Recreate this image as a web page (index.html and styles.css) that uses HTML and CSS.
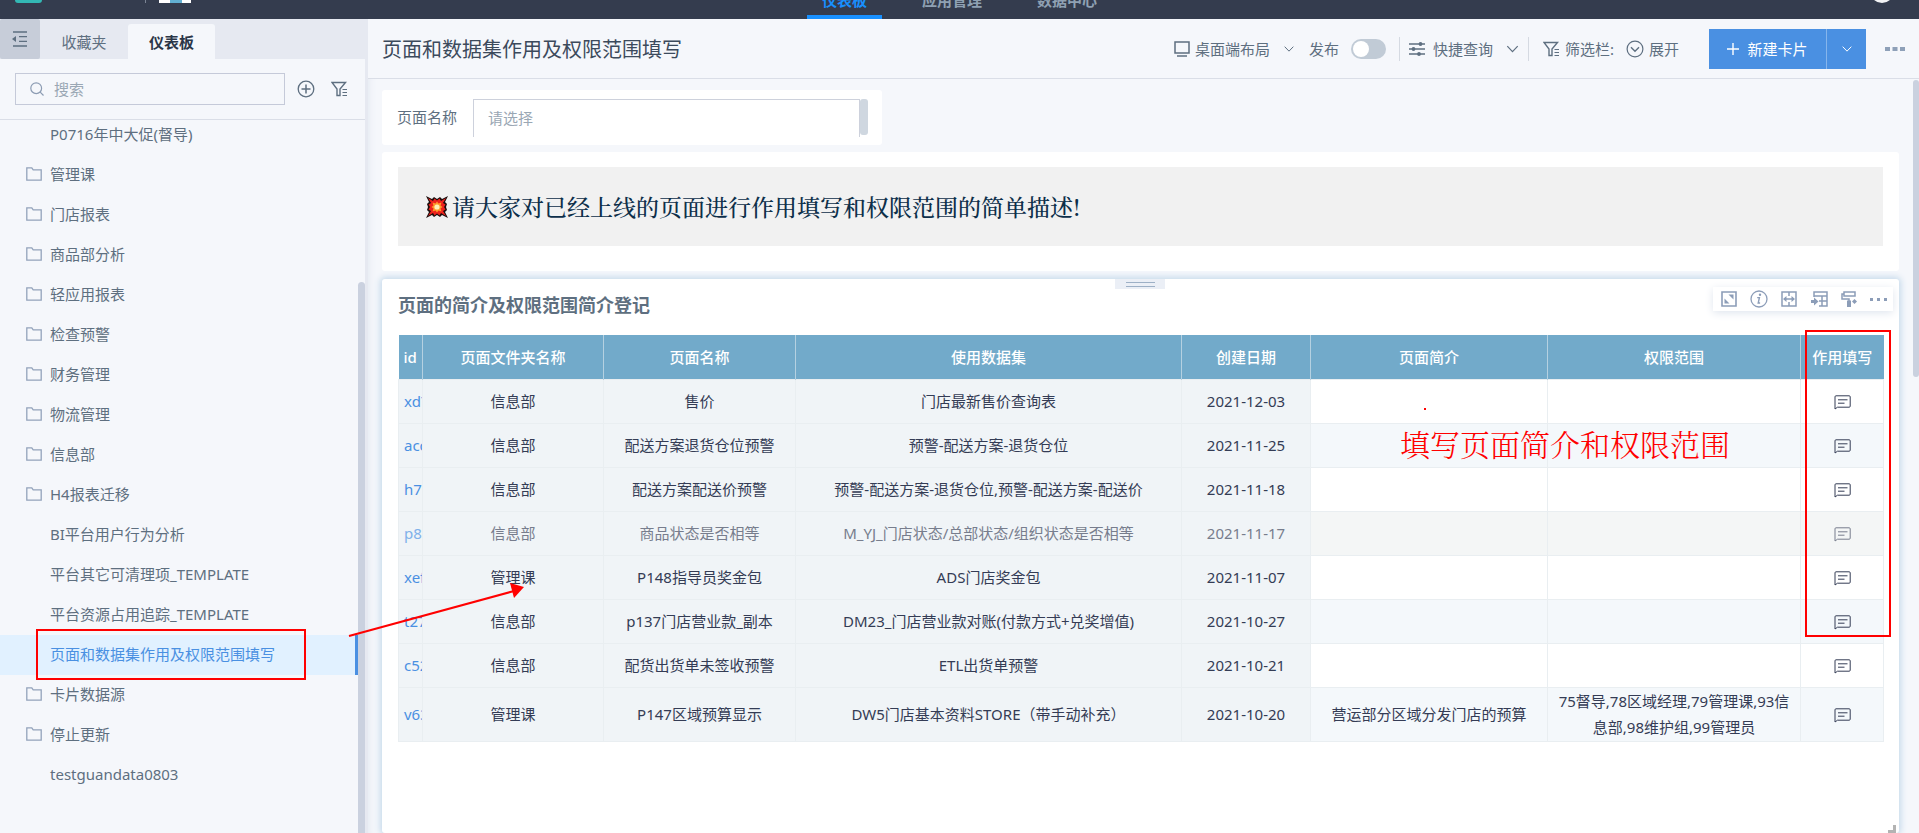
FILE: index.html
```html
<!DOCTYPE html>
<html lang="zh-CN">
<head>
<meta charset="utf-8">
<title>页面和数据集作用及权限范围填写</title>
<link rel="stylesheet" href="styles.css">
</head>
<body>
<svg class="defs" aria-hidden="true">
  <symbol id="folder" viewBox="0 0 16 16"><path d="M.8 14.2V1.8h5l1.4 2h8v10.400z" fill="none" stroke="currentColor" stroke-width="1.3"/></symbol>
  <symbol id="filter" viewBox="0 0 17 16"><path d="M1 1.500h13.500L9 8v6.500H6V8z" fill="none" stroke="currentColor" stroke-width="1.4"/><path d="M11.500 8.500H16M11.500 11.500H16M11.500 14.500H16" stroke="currentColor"/></symbol>
  <symbol id="chevron" viewBox="0 0 12 12"><path d="M.8 3.200 6 8.600l5.200-5.400" fill="none" stroke="currentColor" stroke-width="1.2"/></symbol>
  <symbol id="comment" viewBox="0 0 17 15"><path d="M1 14V1.800Q1 .8 2 .8h13.200q1 0 1 1v9.400q0 1-1 1H3.500z" fill="none" stroke="currentColor"/><path d="M4 4.800h9.500M4 8.200h6.500" stroke="currentColor"/></symbol>
</svg>

<header class="topbar">
  <div class="brand"><span class="logo"></span><span class="brand-line"></span><span class="avatar"></span></div>
  <nav class="topnav">
    <a href="#" class="current">仪表板</a>
    <a href="#">应用管理</a>
    <a href="#">数据中心</a>
  </nav>
  <span class="user"></span>
</header>

<div class="shell">
  <aside class="sidebar">
    <div class="tabs">
      <button class="collapse" aria-label="收起"><svg width="16" height="16" viewBox="0 0 16 16"><path d="M1 1h14M7 5.700h8M7 10.300h8M1 15h14" stroke="currentColor" stroke-width="1.3"/><path d="M0 8l4-3v6z" fill="currentColor"/></svg></button>
      <button class="tab">收藏夹</button>
      <button class="tab active">仪表板</button>
    </div>
    <div class="search-row">
      <label class="search">
        <svg width="14" height="14" viewBox="0 0 14 14"><circle cx="6.200" cy="6.200" r="5.400" fill="none" stroke="currentColor" stroke-width="1.200"/><path d="M10.200 10.200l3.300 3.300" stroke="currentColor" stroke-width="1.200"/></svg>
        <input type="text" placeholder="搜索" aria-label="搜索">
      </label>
      <button class="icon-btn" aria-label="添加"><svg width="18" height="18" viewBox="0 0 18 18"><circle cx="9" cy="9" r="7.800" fill="none" stroke="currentColor" stroke-width="1.300"/><path d="M9 4.500v9M4.500 9h9" stroke="currentColor" stroke-width="1.500"/></svg></button>
      <button class="icon-btn" aria-label="筛选"><svg width="17" height="16"><use href="#filter"/></svg></button>
    </div>
    <div class="tree-wrap">
      <ul class="tree">
        <li class="leaf">P0716年中大促(督导)</li>
        <li><svg><use href="#folder"/></svg>管理课</li>
        <li><svg><use href="#folder"/></svg>门店报表</li>
        <li><svg><use href="#folder"/></svg>商品部分析</li>
        <li><svg><use href="#folder"/></svg>轻应用报表</li>
        <li><svg><use href="#folder"/></svg>检查预警</li>
        <li><svg><use href="#folder"/></svg>财务管理</li>
        <li><svg><use href="#folder"/></svg>物流管理</li>
        <li><svg><use href="#folder"/></svg>信息部</li>
        <li><svg><use href="#folder"/></svg>H4报表迁移</li>
        <li class="leaf">BI平台用户行为分析</li>
        <li class="leaf">平台其它可清理项_TEMPLATE</li>
        <li class="leaf">平台资源占用追踪_TEMPLATE</li>
        <li class="leaf selected">页面和数据集作用及权限范围填写<span class="mark-box"></span></li>
        <li><svg><use href="#folder"/></svg>卡片数据源</li>
        <li><svg><use href="#folder"/></svg>停止更新</li>
        <li class="leaf">testguandata0803</li>
      </ul>
      <span class="tree-scroll"></span>
    </div>
  </aside>

  <main class="main">
    <div class="page-head">
      <h1>页面和数据集作用及权限范围填写</h1>
      <div class="tools">
        <button class="tool layout"><svg width="16" height="16" viewBox="0 0 16 16"><path d="M1 1h14v11H1z" fill="none" stroke="currentColor" stroke-width="1.500"/><path d="M3 15h10" stroke="currentColor" stroke-width="1.500"/></svg>桌面端布局<svg class="chev" width="10" height="10"><use href="#chevron"/></svg></button>
        <label class="publish">发布<input type="checkbox" class="switch"></label>
        <button class="tool query"><svg width="16" height="16" viewBox="0 0 16 16"><path d="M0 3h16M0 8h16M0 13h16" stroke="currentColor" stroke-width="1.400"/><circle cx="11.500" cy="3" r="1.900" fill="currentColor"/><circle cx="4.500" cy="8" r="1.900" fill="currentColor"/><circle cx="10" cy="13" r="1.900" fill="currentColor"/></svg>快捷查询<svg class="chev" width="13" height="12"><use href="#chevron"/></svg></button>
        <span class="tool bar"><svg width="17" height="16"><use href="#filter"/></svg>筛选栏:</span>
        <button class="tool expand"><svg width="18" height="18" viewBox="0 0 18 18"><circle cx="9" cy="9" r="7.900" fill="none" stroke="currentColor" stroke-width="1.200"/><path d="M5 7.200l4 4 4-4" fill="none" stroke="currentColor" stroke-width="1.400"/></svg>展开</button>
        <div class="new-card">
          <button class="new"><svg width="12" height="12" viewBox="0 0 12 12"><path d="M6 0v12M0 6h12" stroke="currentColor" stroke-width="1.400"/></svg>新建卡片</button>
          <button class="new-more" aria-label="更多类型"><svg width="10" height="10"><use href="#chevron"/></svg></button>
        </div>
        <button class="more" aria-label="更多"><svg width="20" height="4"><path d="M0 0h5v4H0zM7.500 0h5v4h-5zM15 0h5v4h-5z" fill="currentColor"/></svg></button>
      </div>
    </div>

    <div class="board">
      <section class="card filter-card">
        <label for="page-name">页面名称</label>
        <input id="page-name" class="picker" type="text" placeholder="请选择">
        <span class="mini-scroll"></span>
      </section>

      <section class="card notice-card">
        <p class="notice"><svg width="22" height="22" viewBox="0 0 22 22"><path d="M0 0l6 3 2-2 3 2 3-2 2 2 6-3-3 6 2 2-1 3 1 3-2 2 3 6-6-3-2 2-3-2-3 2-2-2-6 3 3-6-2-2 1-3-1-3 2-2z" fill="#1a0d0d"/><path d="M2 2l5 3 1.500-2.500L11 4.500l2.500-2L15 5l5-3-3 5 2.500 1.500-1.500 2.500 1.500 2.500L17 15l3 5-5-3-1.500 2.500-2.500-2-2.500 2L7 17l-5 3 3-5-2.500-1.500L4 11 2.500 8.500 5 7z" fill="#ee221c"/><path d="M6.500 6.500l3 1L11 5.500l1.500 2 3-1-1 3 2 1.500-2 1.500 1 3-3-1-1.500 2-1.500-2-3 1 1-3-2-1.500 2-1.500z" fill="#ff9c2a"/><circle cx="11" cy="11" r="2.600" fill="#fff3b8"/></svg><strong>请大家对已经上线的页面进行作用填写和权限范围的简单描述!</strong></p>
      </section>

      <section class="card table-card">
        <span class="drag"></span>
        <h2>页面的简介及权限范围简介登记</h2>
        <div class="card-tools">
          <button aria-label="放大"><svg width="16" height="16" viewBox="0 0 16 16"><path d="M1 1h14v14H1z" fill="none" stroke="currentColor" stroke-width="1.600"/><path d="M7.500 3.500h5v5zM3.500 7.500v5h5z" fill="currentColor"/></svg></button>
          <button aria-label="说明"><svg width="18" height="18" viewBox="0 0 18 18"><circle cx="9" cy="9" r="8" fill="none" stroke="currentColor" stroke-width="1.300"/><path d="M7.200 7.600h2.200L8.200 13h1.900" fill="none" stroke="currentColor" stroke-width="1.400"/><circle cx="10" cy="4.800" r="1.200" fill="currentColor"/></svg></button>
          <button aria-label="列宽"><svg width="16" height="16" viewBox="0 0 16 16"><path d="M1 1h14v14H1zM8 1v4M8 11v4M3 8h10" fill="none" stroke="currentColor" stroke-width="1.500"/><path d="M2 8l3.500-3v6zM14 8l-3.500-3v6z" fill="currentColor"/></svg></button>
          <button aria-label="冻结列"><svg width="17" height="16" viewBox="0 0 17 16"><path d="M3 6V1h13v14H8M3 5h13M11 5v10M8 10h8" fill="none" stroke="currentColor" stroke-width="1.500"/><path d="M0 9h3V6.500l4.500 4L3 14.500V12H0z" fill="currentColor"/></svg></button>
          <button aria-label="样式"><svg width="16" height="16" viewBox="0 0 16 16"><path d="M3 1h11v4H3zM3 3H1v5h7v2" fill="none" stroke="currentColor" stroke-width="1.500"/><path d="M6 9.500h4V16H6z" fill="currentColor"/><path d="M13.500 8l2.500 2.500-2.500 2.500-2.500-2.500z" fill="currentColor"/></svg></button>
          <button aria-label="更多"><svg width="17" height="3"><path d="M0 0h3v3H0zM7 0h3v3H7zM14 0h3v3h-3z" fill="currentColor"/></svg></button>
        </div>
        <table>
          <colgroup><col class="c-id"><col class="c-folder"><col class="c-name"><col class="c-set"><col class="c-date"><col class="c-desc"><col class="c-scope"><col class="c-act"></colgroup>
          <thead><tr><th>id</th><th>页面文件夹名称</th><th>页面名称</th><th>使用数据集</th><th>创建日期</th><th>页面简介</th><th>权限范围</th><th>作用填写</th></tr></thead>
          <tbody>
            <tr><td><a href="#">xd7</a></td><td>信息部</td><td>售价</td><td>门店最新售价查询表</td><td>2021-12-03</td><td></td><td></td><td><button aria-label="填写"><svg><use href="#comment"/></svg></button></td></tr>
            <tr><td><a href="#">acc</a></td><td>信息部</td><td>配送方案退货仓位预警</td><td>预警-配送方案-退货仓位</td><td>2021-11-25</td><td></td><td></td><td><button aria-label="填写"><svg><use href="#comment"/></svg></button></td></tr>
            <tr><td><a href="#">h7</a></td><td>信息部</td><td>配送方案配送价预警</td><td>预警-配送方案-退货仓位,预警-配送方案-配送价</td><td>2021-11-18</td><td></td><td></td><td><button aria-label="填写"><svg><use href="#comment"/></svg></button></td></tr>
            <tr class="hover"><td><a href="#">p8</a></td><td>信息部</td><td>商品状态是否相等</td><td>M_YJ_门店状态/总部状态/组织状态是否相等</td><td>2021-11-17</td><td></td><td></td><td><button aria-label="填写"><svg><use href="#comment"/></svg></button></td></tr>
            <tr><td><a href="#">xef</a></td><td>管理课</td><td>P148指导员奖金包</td><td>ADS门店奖金包</td><td>2021-11-07</td><td></td><td></td><td><button aria-label="填写"><svg><use href="#comment"/></svg></button></td></tr>
            <tr><td><a href="#">t27</a></td><td>信息部</td><td>p137门店营业款_副本</td><td>DM23_门店营业款对账(付款方式+兑奖增值)</td><td>2021-10-27</td><td></td><td></td><td><button aria-label="填写"><svg><use href="#comment"/></svg></button></td></tr>
            <tr><td><a href="#">c52</a></td><td>信息部</td><td>配货出货单未签收预警</td><td>ETL出货单预警</td><td>2021-10-21</td><td></td><td></td><td><button aria-label="填写"><svg><use href="#comment"/></svg></button></td></tr>
            <tr><td><a href="#">v63</a></td><td>管理课</td><td>P147区域预算显示</td><td>DW5门店基本资料STORE（带手动补充）</td><td>2021-10-20</td><td>营运部分区域分发门店的预算</td><td>75督导,78区域经理,79管理课,93信息部,98维护组,99管理员</td><td><button aria-label="填写"><svg><use href="#comment"/></svg></button></td></tr>
          </tbody>
        </table>
        <span class="corner"></span>
      </section>
      <span class="page-scroll"></span>
    </div>
  </main>
</div>

<svg class="mark-arrow" width="178" height="58" viewBox="0 0 178 58" aria-hidden="true"><path d="M1 54L166 9" stroke="#f00" stroke-width="2"/><path d="M176 5L162 1l4 15z" fill="#f00"/></svg>
<span class="mark-column"></span>
<span class="mark-dot"></span>
<p class="mark-text">填写页面简介和权限范围</p>
</body>
</html>
```
FILE: styles.css
```css
* { box-sizing: border-box; }
body {
  margin: 0;
  height: 100vh;
  overflow: hidden;
  position: relative;
  display: flex;
  flex-direction: column;
  background: #f5f7fb;
  color: #5e6f80;
  font: 15px/24px "Noto Sans", "Noto Sans CJK SC", sans-serif;
}
button, input { font: inherit; color: inherit; border: 0; padding: 0; margin: 0; background: none; }
button { display: inline-flex; align-items: center; }
svg { flex: none; }
.defs { position: absolute; width: 0; height: 0; }

/* top bar */
.topbar { position: relative; height: 19px; flex: none; background: #343c4e; display: flex; justify-content: center; overflow: hidden; }
.brand { position: absolute; left: 15px; top: 0; display: flex; }
.logo { width: 27px; height: 3px; background: #33b8b4; border-radius: 0 0 3px 3px; }
.brand-line { width: 1px; height: 3px; margin-left: 103px; background: #7b8494; }
.avatar { width: 32px; height: 3px; margin-left: 13px; background: linear-gradient(90deg, #fff 11px, #62b0d2 11px 23px, #fff 23px); }
.topnav { display: flex; align-items: flex-end; gap: 25px; font-weight: bold; }
.topnav a { height: 28px; padding: 0 15px; color: #8fa1b3; text-decoration: none; line-height: 18px; }
.topnav a.current { color: #1890ff; border-bottom: 4px solid #1890ff; }
.user { position: absolute; right: 25px; top: -21px; width: 24px; height: 24px; border-radius: 50%; background: #f2f3f5; }

.shell { flex: 1; min-height: 0; display: flex; }

/* sidebar */
.sidebar { width: 368px; flex: none; border-right: 3px solid #e6e9f1; display: flex; flex-direction: column; min-height: 0; }
.tabs { height: 40px; flex: none; background: #e6e9f1; display: flex; align-items: flex-end; }
.collapse { width: 40px; height: 40px; background: #c7cdd9; justify-content: center; border-radius: 2px; }
.tab { height: 35px; width: 88px; justify-content: center; }
.tab.active { width: 87px; background: #f5f7fb; color: #2b3648; font-weight: bold; border-radius: 3px 3px 0 0; }
.search-row { height: 61px; flex: none; border-bottom: 1px solid #dadee7; display: flex; align-items: center; padding: 0 15px; }
.search { width: 270px; height: 32px; border: 1px solid #c5cad9; display: flex; align-items: center; padding: 0 14px; gap: 10px; color: #8c9cb3; }
.search input { flex: 1; min-width: 0; outline: 0; }
input::placeholder { color: #9aa7b4; opacity: 1; }
.icon-btn { margin-left: 12px; }
.icon-btn + .icon-btn { margin-left: 16px; }
.tree-wrap { flex: 1; min-height: 0; overflow: hidden; position: relative; }
.tree { list-style: none; margin: -5px 7px 0 0; padding: 0; }
.tree li { height: 40px; padding: 0 0 2px 26px; display: flex; align-items: center; gap: 8px; position: relative; white-space: nowrap; }
.tree li svg { width: 16px; height: 16px; color: #93a3bb; }
.tree li.leaf { padding-left: 50px; }
.tree li.selected { background: #e1f1ff; color: #4a90e2; border-right: 3px solid #4a90e2; }
.mark-box { position: absolute; left: 36px; top: -6px; width: 270px; height: 51px; border: 2px solid #f00; }
.tree-scroll { position: absolute; right: 0; top: 162px; bottom: 0; width: 7px; background: #cad1df; border-radius: 4px 4px 0 0; }

/* page header */
.main { flex: 1; min-width: 0; display: flex; flex-direction: column; }
.page-head { height: 60px; flex: none; border-bottom: 1px solid #dadee7; display: flex; align-items: center; justify-content: space-between; padding: 0 14px; }
h1 { margin: 0; padding-top: 2px; font-size: 20px; font-weight: normal; line-height: 30px; color: #3c4a5c; }
.tools { display: flex; align-items: center; color: #5e6f80; }
.tool { display: inline-flex; align-items: center; gap: 5px; }
.layout .chev { margin-left: 9px; }
.publish { margin-left: 15px; display: flex; align-items: center; gap: 12px; }
.switch { appearance: none; width: 35px; height: 20px; border-radius: 10px; background: #c1cbd6; padding: 2px; }
.switch::before { content: ""; display: block; width: 16px; height: 16px; border-radius: 50%; background: #fff; }
.query { height: 24px; margin-left: 13px; padding: 0 9px; gap: 8px; border-left: 1px solid #d5dae2; border-right: 1px solid #d5dae2; }
.query .chev { margin-left: 5px; }
.bar { margin-left: 14px; }
.expand { margin-left: 12px; }
.new-card { margin-left: 30px; display: flex; height: 40px; background: #4a90e2; color: #fff; }
.new { width: 117px; justify-content: center; gap: 8px; }
.new-more { width: 40px; justify-content: center; border-left: 1px solid #86b5ec; }
.more { margin-left: 19px; color: #8ea0b8; }

/* board */
.board { flex: 1; min-height: 0; position: relative; display: flex; flex-direction: column; gap: 7px; padding: 11px 20px 0 14px; overflow: hidden; box-shadow: inset 8px 0 8px -8px #dfe4ee; }
.card { background: #fff; border-radius: 3px; flex: none; }
.page-scroll { position: absolute; right: 0; top: 1px; width: 6px; height: 297px; background: #cad1df; border-radius: 3px; }
.filter-card { width: 500px; max-width: 100%; height: 55px; display: flex; padding: 9px 14px 0 15px; }
.filter-card label { width: 76px; line-height: 36px; }
.picker { flex: 1; min-width: 0; height: 38px; padding: 0 14px 2px; border: 1px solid #cdd1dc; border-bottom: 0; }
.mini-scroll { width: 8px; height: 36px; border-radius: 3px; background: #cfd7e0; }
.notice-card { height: 119px; padding: 15px 16px; }
.notice { margin: 0; height: 79px; padding: 0 28px; background: #f1f1f1; display: flex; align-items: center; gap: 4px; color: #0d2f4a; font: 23px/34px "Noto Serif CJK SC", "Liberation Serif", serif; }
.notice strong { font-weight: 500; }
.table-card { flex: 1; position: relative; margin-top: 1px; padding: 14px 16px 0; box-shadow: 0 0 6px 2px #c6daeb; }
.drag { position: absolute; left: 733px; top: 0; width: 50px; height: 10px; background: linear-gradient(#9db0c6, #9db0c6) 50% 3px / 29px 1px no-repeat, linear-gradient(#9db0c6, #9db0c6) 50% 7px / 29px 1px no-repeat, #ebeff6; }
h2 { margin: 0 0 18px; font-size: 18px; line-height: 24px; color: #5e6f80; }
.card-tools { position: absolute; right: 6px; top: 8px; height: 24px; padding: 0 6px 0 8px; display: flex; align-items: center; justify-content: space-between; width: 180px; background: #fff; color: #8c9db8; box-shadow: 0 2px 8px #dfe5ee; }
.corner { position: absolute; right: 3px; bottom: 0; width: 8px; height: 8px; border: solid #b3b3b3; border-width: 0 3px 3px 0; }

table { width: 100%; table-layout: fixed; border-collapse: collapse; color: #343c55; }
.c-id { width: 24px; } .c-folder { width: 181px; } .c-name { width: 192px; } .c-set { width: 386px; }
.c-date { width: 129px; } .c-desc { width: 237px; } .c-scope { width: 253px; } .c-act { width: 83px; }
th { height: 44px; padding: 0 5px; background: #72aaca; color: #fff; font-weight: 500; border-right: 1px solid #b5d1e1; white-space: nowrap; }
th:last-child { border-right: 0; }
td { height: 44px; padding: 0 8px; text-align: center; line-height: 26px; border: 1px solid #e9eef1; background: #f0f4f7; }
td:nth-child(n+6) { background: #fff; }
tr:nth-child(even) td:nth-child(n+6) { background: #f4f8fb; }
td:first-child { padding: 0 0 0 5px; text-align: left; overflow: hidden; white-space: nowrap; }
td a { color: #4a90e2; text-decoration: none; }
td svg { width: 17px; height: 15px; }
td button { vertical-align: middle; }
tr:last-child td { height: 54px; }
tbody tr.hover td { color: #777d8d; }
tbody tr.hover td:nth-child(n+6) { background: #f4f6f6; }
tbody tr.hover a { color: #80b1ea; }

/* annotations over the page */
.mark-arrow { position: absolute; left: 348px; top: 582px; }
.mark-column { position: absolute; left: 1805px; top: 330px; width: 86px; height: 307px; border: 2px solid #f00; }
.mark-dot { position: absolute; left: 1424px; top: 408px; width: 2px; height: 2px; background: #f00; }
.mark-text { position: absolute; left: 1400px; top: 423px; margin: 0; color: #f00; font: 300 30px/40px "Noto Serif CJK SC", "Noto Sans CJK SC", serif; white-space: nowrap; }
```
